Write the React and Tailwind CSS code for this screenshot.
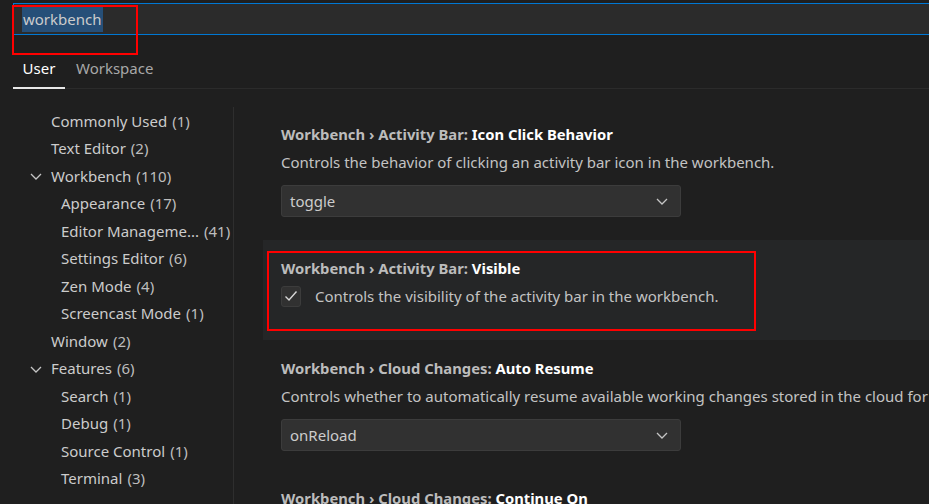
import React from "react";

const FONT = { fontFamily: '"Noto Sans", "Open Sans", sans-serif' };

const tree = [
  { label: "Commonly Used", count: 1, level: 1 },
  { label: "Text Editor", count: 2, level: 1 },
  { label: "Workbench", count: 110, level: 1, open: true },
  { label: "Appearance", count: 17, level: 2 },
  { label: "Editor Manageme...", count: 41, level: 2 },
  { label: "Settings Editor", count: 6, level: 2 },
  { label: "Zen Mode", count: 4, level: 2 },
  { label: "Screencast Mode", count: 1, level: 2 },
  { label: "Window", count: 2, level: 1 },
  { label: "Features", count: 6, level: 1, open: true },
  { label: "Search", count: 1, level: 2 },
  { label: "Debug", count: 1, level: 2 },
  { label: "Source Control", count: 1, level: 2 },
  { label: "Terminal", count: 3, level: 2 },
];

function Chevron({ className }) {
  return (
    <svg viewBox="0 0 16 16" className={className} fill="none" stroke="currentColor" strokeWidth="1.3">
      <path d="M3 6l5 5 5-5" />
    </svg>
  );
}

function Title({ cat, name }) {
  return (
    <div className="h-[28px] leading-[28px] font-bold text-[14.8px] whitespace-nowrap">
      <span className="text-[#bcbcbc]">{cat}</span>
      <span className="text-white">{name}</span>
    </div>
  );
}

function Dropdown({ value }) {
  return (
    <div className="mt-[9px] w-[400px] h-[32px] bg-[#313131] border border-[#3c3c3c] rounded-[3px] flex items-center justify-between pl-[8px] pr-[10px] text-[15px] text-[#cccccc]">
      <span>{value}</span>
      <Chevron className="w-[16px] h-[16px] text-[#c5c5c5]" />
    </div>
  );
}

export default function App() {
  return (
    <div className="w-[929px] h-[504px] bg-[#1f1f1f] overflow-hidden relative" style={FONT}>
      {/* search */}
      <div className="pt-[3px] pl-[13px]">
        <div className="h-[32px] bg-[#2b2b2b] border-y border-l border-[#0078d4] flex items-center pl-[8px]">
          <span className="bg-[#264f78] text-[#cccccc] text-[15px] leading-[25px] px-px">workbench</span>
        </div>
      </div>
      <div className="absolute left-[12px] top-[5px] w-[126px] h-[50px] border-2 border-[#ff0000]" />

      {/* tabs */}
      <div className="ml-[13px] mt-[22px] flex border-b border-[#2b2b2b] h-[32px] text-[15px]">
        <div className="w-[52px] flex justify-center items-start border-b-2 border-[#e7e7e7] text-white -mb-px">User</div>
        <div className="pl-[11px] text-[#a8a8a8]">Workspace</div>
      </div>

      <div className="flex">
        {/* tree */}
        <div className="w-[234px] shrink-0 pt-[18px]">
          <div className="border-r border-[#2e2e2e] h-[420px]">
            {tree.map((t) => (
              <div
                key={t.label}
                className={`h-[27.5px] flex items-center text-[15px] text-[#cccccc] whitespace-nowrap ${t.level === 2 ? "pl-[61px]" : "pl-[51px]"} relative`}
              >
                {t.open && (
                  <Chevron className="absolute left-[28px] top-[6px] w-[16px] h-[16px] text-[#c5c5c5]" />
                )}
                <span>{t.label}</span>
                <span className="ml-[5px] text-[#bdbdbd]">({t.count})</span>
              </div>
            ))}
          </div>
        </div>

        {/* settings */}
        <div className="flex-1 pl-[29px] pt-[17px]">
          <div className="pl-[18px] pt-[14px] pb-[23px]">
            <Title cat="Workbench › Activity Bar: " name="Icon Click Behavior" />
            <div className="h-[28px] leading-[28px] text-[15px] text-[#c3c3c3] whitespace-nowrap">
              Controls the behavior of clicking an activity bar icon in the workbench.
            </div>
            <Dropdown value="toggle" />
          </div>

          <div className="relative bg-[#252627] pl-[18px] pt-[14px] pb-[30px]">
            <Title cat="Workbench › Activity Bar: " name="Visible" />
            <div className="h-[28px] flex items-center text-[15px] text-[#c3c3c3] whitespace-nowrap">
              <div className="w-[20px] h-[21px] bg-[#313131] border border-[#3c3c3c] rounded-[3px] flex items-center justify-center mr-[14px]">
                <svg viewBox="0 0 16 16" className="w-[16px] h-[16px]" fill="none" stroke="#d8d8d8" strokeWidth="1.4">
                  <path d="M2.5 8.5l3.5 3.5 7.5-8.5" />
                </svg>
              </div>
              Controls the visibility of the activity bar in the workbench.
            </div>
            <div className="absolute left-[4px] top-[11px] w-[489px] h-[80px] border-2 border-[#ff0000]" />
          </div>

          <div className="pl-[18px] pt-[14px] pb-[19px]">
            <Title cat="Workbench › Cloud Changes: " name="Auto Resume" />
            <div className="h-[28px] leading-[28px] text-[15px] text-[#c3c3c3] whitespace-nowrap">
              Controls whether to automatically resume available working changes stored in the cloud for the current workspace.
            </div>
            <Dropdown value="onReload" />
          </div>

          <div className="pl-[18px] pt-[14px]">
            <Title cat="Workbench › Cloud Changes: " name="Continue On" />
          </div>
        </div>
      </div>
    </div>
  );
}
